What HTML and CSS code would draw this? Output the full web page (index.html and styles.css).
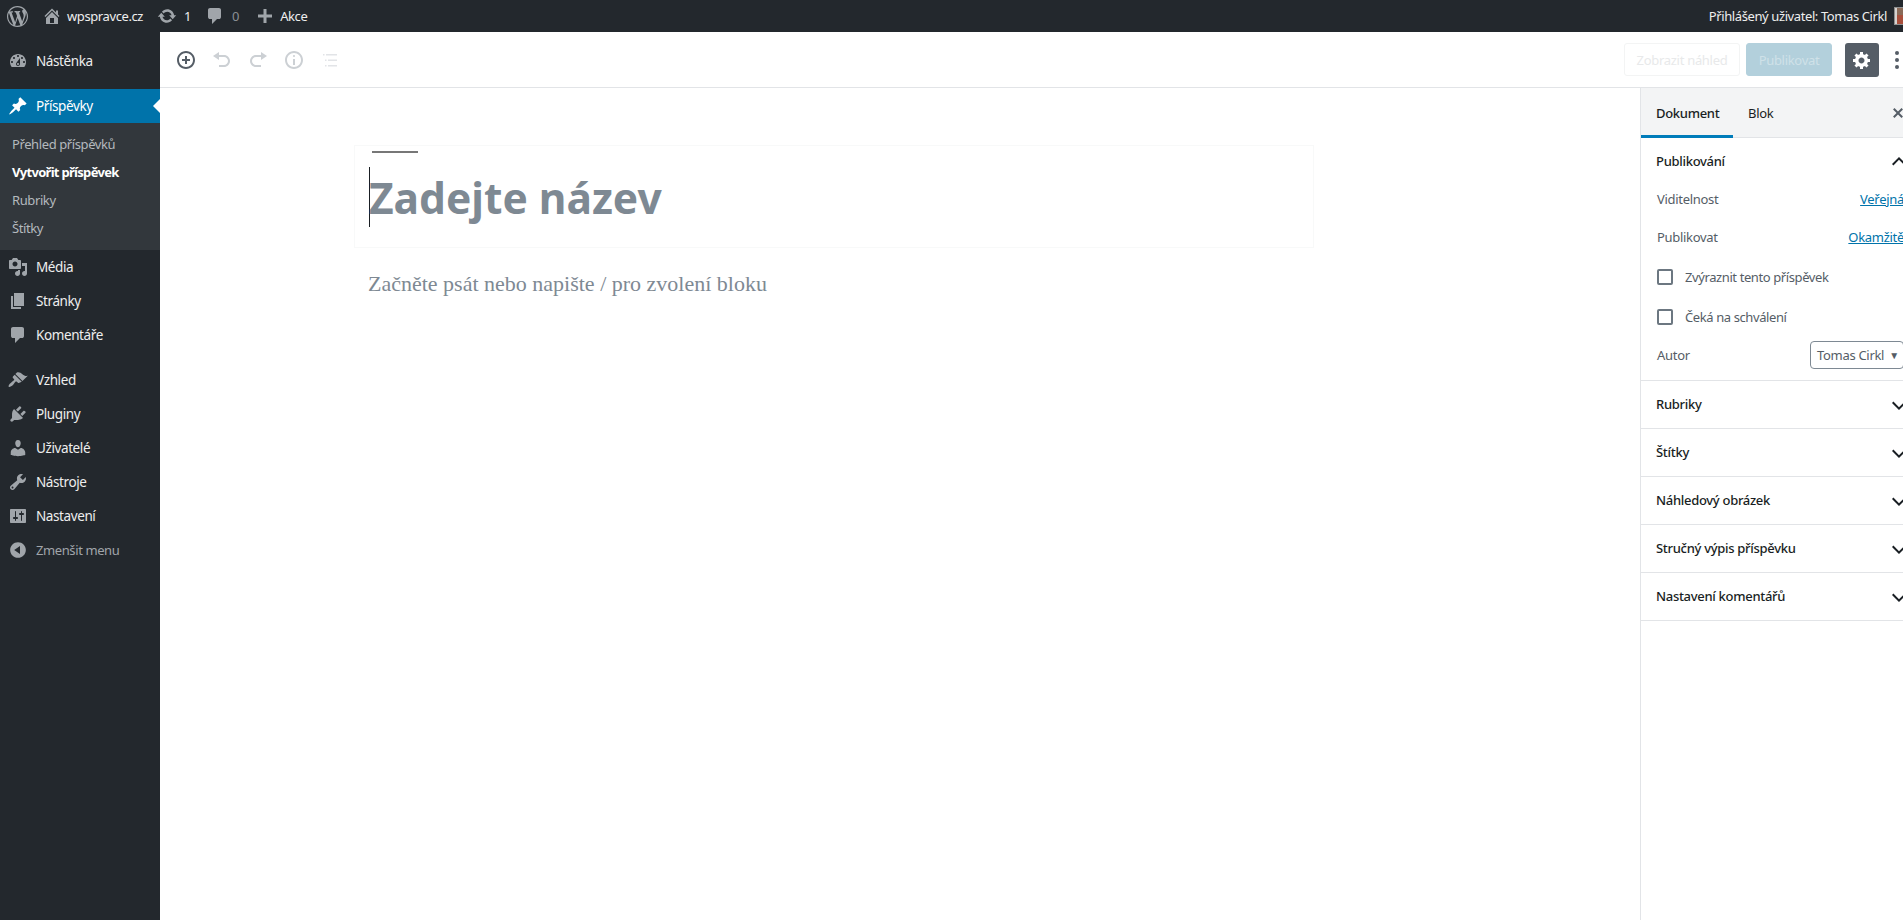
FILE: index.html
```html
<!DOCTYPE html>
<html lang="cs">
<head>
    <meta charset="UTF-8">
    <title>Vytvořit příspěvek</title>
    <link rel="stylesheet" href="styles.css">
</head>
<body>
<div class="page">
    <header class="adminbar">
        <svg class="bar-logo" viewBox="0 0 20 20"><path d="M20 10c0-5.51-4.49-10-10-10C4.48 0 0 4.49 0 10c0 5.52 4.48 10 10 10 5.51 0 10-4.48 10-10zM7.78 15.37L4.37 6.22c.55-.02 1.17-.08 1.17-.08.5-.06.44-1.13-.06-1.11 0 0-1.45.11-2.37.11-.18 0-.37 0-.58-.01C4.12 2.69 6.87 1.11 10 1.11c2.33 0 4.45.87 6.05 2.34-.68-.11-1.65.39-1.65 1.58 0 .74.45 1.36.9 2.1.35.61.55 1.36.55 2.46 0 1.49-1.4 5-1.4 5l-3.03-8.37c.54-.02.82-.17.82-.17.5-.05.44-1.25-.06-1.22 0 0-1.44.12-2.38.12-.87 0-2.33-.12-2.33-.12-.5-.03-.56 1.2-.06 1.22l.92.08 1.26 3.41zM17.41 10c.24-.64.74-1.87.43-4.25.7 1.29 1.05 2.71 1.05 4.25 0 3.29-1.73 6.24-4.4 7.78.97-2.59 1.94-5.2 2.92-7.78zM6.1 18.09C3.12 16.65 1.11 13.53 1.11 10c0-1.3.23-2.48.72-3.59C3.25 10.3 4.67 14.2 6.1 18.09zm4.03-6.63l2.58 6.98c-.86.29-1.76.45-2.71.45-.79 0-1.57-.11-2.29-.33.81-2.38 1.62-4.74 2.42-7.1z"/></svg>
        <a class="bar-item bar-home"><svg viewBox="0 0 20 20"><path d="M16 8.5l1.53 1.53-1.06 1.06L10 4.62l-6.47 6.47-1.06-1.06L10 2.5l4 4v-2h2v4zm-6-2.46l6 5.99V18H4v-5.97zM12 17v-5H8v5h4z"/></svg>wpspravce.cz</a>
        <a class="bar-item bar-updates"><svg viewBox="0 0 20 20"><path d="M10.2 3.28c3.53 0 6.43 2.61 6.92 6h2.08l-3.5 4-3.5-4h2.32c-.45-1.97-2.21-3.45-4.32-3.45-1.45 0-2.73.71-3.54 1.78L4.95 5.66C6.23 4.2 8.11 3.28 10.2 3.28zm-.4 13.44c-3.52 0-6.43-2.61-6.92-6H.8l3.5-4c1.17 1.33 2.33 2.67 3.5 4H5.48c.45 1.97 2.21 3.45 4.32 3.45 1.45 0 2.73-.71 3.54-1.78l1.71 1.95c-1.28 1.46-3.15 2.38-5.25 2.38z"/></svg>1</a>
        <a class="bar-item bar-comments"><svg viewBox="0 0 20 20"><path d="M5 2h9q.82 0 1.41.59T16 4v7q0 .82-.59 1.41T14 13h-2l-5 5v-5H5q-.82 0-1.41-.59T3 11V4q0-.82.59-1.41T5 2z"/></svg><span>0</span></a>
        <a class="bar-item bar-new"><svg viewBox="0 0 20 20"><path d="M17 8.5v3h-5.5V17h-3v-5.5H3v-3h5.5V3h3v5.5z"/></svg>Akce</a>
        <a class="bar-user">Přihlášený uživatel: Tomas Cirkl<span class="avatar"><i></i></span></a>
    </header>

    <div class="wrap">
        <nav class="sidebar">
            <ul class="menu">
                <li><svg viewBox="0 0 20 20"><path d="M3.76 16h12.48c1.1-1.37 1.76-3.11 1.76-5 0-4.42-3.58-8-8-8s-8 3.58-8 8c0 1.89.66 3.63 1.76 5zM10 4c.55 0 1 .45 1 1s-.45 1-1 1-1-.45-1-1 .45-1 1-1zM6 6c.55 0 1 .45 1 1s-.45 1-1 1-1-.45-1-1 .45-1 1-1zm8 0c.55 0 1 .45 1 1s-.45 1-1 1-1-.45-1-1 .45-1 1-1zm-5.37 5.55L12 7v6c0 1.1-.9 2-2 2s-2-.9-2-2c0-.57.24-1.08.63-1.45zM4 10c.55 0 1 .45 1 1s-.45 1-1 1-1-.45-1-1 .45-1 1-1zm12 0c.55 0 1 .45 1 1s-.45 1-1 1-1-.45-1-1 .45-1 1-1zm-5 3c0-.55-.45-1-1-1s-1 .45-1 1 .45 1 1 1 1-.45 1-1z"/></svg>Nástěnka</li>
                <li class="sep"></li>
                <li class="active"><svg viewBox="0 0 20 20"><path d="M10.44 3.02l1.82-1.82 6.36 6.35-1.83 1.82c-1.05-.68-2.48-.57-3.41.36l-.75.75c-.92.93-1.04 2.35-.35 3.41l-1.83 1.82-2.41-2.41-2.8 2.79c-.42.42-3.38 2.71-3.8 2.29s1.86-3.39 2.28-3.81l2.79-2.79L4.1 9.36l1.83-1.82c1.05.69 2.48.57 3.4-.36l.75-.75c.93-.92 1.05-2.35.36-3.41z"/></svg>Příspěvky</li>
                <li class="submenu">
                    <a>Přehled příspěvků</a>
                    <a class="current">Vytvořit příspěvek</a>
                    <a>Rubriky</a>
                    <a>Štítky</a>
                </li>
                <li><svg viewBox="0 0 20 20"><path d="M13 11V4c0-.55-.45-1-1-1h-1.67L9 1H5L3.67 3H2c-.55 0-1 .45-1 1v7c0 .55.45 1 1 1h10c.55 0 1-.45 1-1zM7 4.5c1.38 0 2.5 1.12 2.5 2.5S8.38 9.5 7 9.5 4.5 8.38 4.5 7 5.62 4.5 7 4.5zM14 6h5v10.5c0 1.38-1.12 2.5-2.5 2.5S14 17.88 14 16.5s1.12-2.5 2.5-2.5c.17 0 .34.02.5.05V9h-3V6zm-4 8.05V13h2v3.5c0 1.38-1.12 2.5-2.5 2.5S7 17.88 7 16.5 8.12 14 9.5 14c.17 0 .34.02.5.05z"/></svg>Média</li>
                <li><svg viewBox="0 0 20 20"><path d="M6 15V2h10v13H6zm-1 1h8v2H3V5h2v11z"/></svg>Stránky</li>
                <li><svg viewBox="0 0 20 20"><path d="M5 2h9q.82 0 1.41.59T16 4v7q0 .82-.59 1.41T14 13h-2l-5 5v-5H5q-.82 0-1.41-.59T3 11V4q0-.82.59-1.41T5 2z"/></svg>Komentáře</li>
                <li class="sep"></li>
                <li><svg viewBox="0 0 20 20"><path d="M14.48 11.06L7.41 3.99l1.5-1.5c.5-.56 2.3-.47 3.51.32 1.21.8 1.43 1.28 2.91 2.1 1.18.64 2.45 1.26 4.45.85zm-.71.71L6.7 4.7 4.93 6.47c-.39.39-.39 1.02 0 1.41l1.06 1.06c.39.39.39 1.03 0 1.42-.6.6-1.43 1.11-2.21 1.69-.35.26-.7.53-1.01.84C1.43 13.71 0 16.06.72 16.78c.71.71 3.07-.71 4.2-1.84.31-.31.58-.66.84-1.01.58-.78 1.09-1.61 1.69-2.21.39-.39 1.03-.39 1.42 0l1.06 1.06c.39.39 1.02.39 1.41 0z"/></svg>Vzhled</li>
                <li><svg viewBox="0 0 20 20"><path d="M13.11 4.36L9.87 7.6 8 5.73l3.24-3.24c.35-.34 1.05-.2 1.56.32.52.51.66 1.21.31 1.55zm-8 1.77l.91-1.12 9.01 9.01-1.19.84c-.71.71-2.63 1.16-3.82 1.16H6.14L4.9 17.26c-.59.59-1.54.59-2.12 0-.59-.58-.59-1.53 0-2.12l1.24-1.24v-3.88c0-1.13.4-3.19 1.09-3.89zm7.26 3.97l3.24-3.24c.34-.35 1.04-.21 1.55.31.52.51.66 1.21.31 1.55l-3.24 3.25z"/></svg>Pluginy</li>
                <li><svg viewBox="0 0 20 20"><path d="M10 9.25c-2.27 0-2.73-3.44-2.73-3.44C7 4.02 7.82 2 9.97 2c2.16 0 2.98 2.02 2.71 3.81 0 0-.41 3.44-2.68 3.44zm0 2.57L12.72 10c2.39 0 4.52 2.33 4.52 4.53v2.49s-3.65 1.13-7.24 1.13c-3.65 0-7.24-1.13-7.24-1.13v-2.49c0-2.25 1.94-4.48 4.47-4.48z"/></svg>Uživatelé</li>
                <li><svg viewBox="0 0 20 20"><path d="M16.68 9.77c-1.34 1.34-3.3 1.67-4.95.99l-5.41 6.52c-.99.99-2.59.99-3.58 0s-.99-2.59 0-3.57l6.52-5.42c-.68-1.65-.35-3.61.99-4.95 1.28-1.28 3.12-1.62 4.72-1.06l-2.89 2.89 2.82 2.82 2.86-2.87c.53 1.58.18 3.39-1.08 4.65zM3.81 16.21c.4.39 1.04.39 1.43 0 .4-.4.4-1.04 0-1.43-.39-.4-1.03-.4-1.43 0-.39.39-.39 1.03 0 1.43z"/></svg>Nástroje</li>
                <li><svg viewBox="0 0 20 20"><path d="M18 16V4c0-.55-.45-1-1-1H3c-.55 0-1 .45-1 1v12c0 .55.45 1 1 1h14c.55 0 1-.45 1-1zM8 11h1c.55 0 1 .45 1 1s-.45 1-1 1H8v1.5c0 .28-.22.5-.5.5s-.5-.22-.5-.5V13H6c-.55 0-1-.45-1-1s.45-1 1-1h1V5.5c0-.28.22-.5.5-.5s.5.22.5.5V11zm5-2h-1c-.55 0-1-.45-1-1s.45-1 1-1h1V5.5c0-.28.22-.5.5-.5s.5.22.5.5V7h1c.55 0 1 .45 1 1s-.45 1-1 1h-1v5.5c0 .28-.22.5-.5.5s-.5-.22-.5-.5V9z"/></svg>Nastavení</li>
                <li class="collapse"><svg viewBox="0 0 20 20"><path d="M10 2.16c4.33 0 7.84 3.51 7.84 7.84s-3.51 7.84-7.84 7.84S2.16 14.33 2.16 10 5.71 2.16 10 2.16zm2 11.72V6.12L6.18 9.97z"/></svg>Zmenšit menu</li>
            </ul>
        </nav>

        <div class="content">
            <div class="toolbar">
                <button class="tool tool-on"><svg viewBox="0 0 20 20"><path d="M10 1c-5 0-9 4-9 9s4 9 9 9 9-4 9-9-4-9-9-9zm0 16c-3.9 0-7-3.1-7-7s3.1-7 7-7 7 3.1 7 7-3.1 7-7 7zm1-11H9v3H6v2h3v3h2v-3h3V9h-3V6z"/></svg></button>
                <button class="tool"><svg viewBox="0 0 20 20"><path d="M12 5H7V2L1 6l6 4V7h5c2.2 0 4 1.8 4 4s-1.8 4-4 4H7v2h5c3.3 0 6-2.7 6-6s-2.7-6-6-6z"/></svg></button>
                <button class="tool"><svg viewBox="0 0 20 20"><path d="M8 5h5V2l6 4-6 4V7H8c-2.2 0-4 1.8-4 4s1.8 4 4 4h5v2H8c-3.3 0-6-2.7-6-6s2.7-6 6-6z"/></svg></button>
                <button class="tool"><svg viewBox="0 0 20 20"><path d="M9 15h2V9H9v6zm1-10c-.5 0-1 .5-1 1s.5 1 1 1 1-.5 1-1-.5-1-1-1zm0-4c-5 0-9 4-9 9s4 9 9 9 9-4 9-9-4-9-9-9zm0 16c-3.9 0-7-3.1-7-7s3.1-7 7-7 7 3.1 7 7-3.1 7-7 7z"/></svg></button>
                <button class="tool tool-list"><svg viewBox="0 0 20 20"><path d="M3 4h1.5v1.5H3zM6 4h11v1.5H6zM5 9.5h1.5V11H5zM8 9.5h9V11H8zM5 15h1.5v1.5H5zM8 15h9v1.5H8z"/></svg></button>
                <div class="toolbar-right">
                    <button class="btn-preview">Zobrazit náhled</button>
                    <button class="btn-publish">Publikovat</button>
                    <button class="btn-gear"><svg viewBox="0 0 20 20"><path d="M18 12h-2.18c-.17.7-.44 1.35-.81 1.93l1.54 1.54-2.1 2.1-1.54-1.54c-.58.36-1.23.63-1.91.79V19H8v-2.18c-.68-.16-1.33-.43-1.91-.79l-1.54 1.54-2.12-2.12 1.54-1.54c-.36-.58-.63-1.23-.79-1.91H1V9.03h2.17c.16-.7.44-1.35.8-1.94L2.43 5.55l2.1-2.1 1.54 1.54c.58-.37 1.24-.64 1.93-.81V2h3v2.18c.68.16 1.33.43 1.91.79l1.54-1.54 2.12 2.12-1.54 1.54c.36.59.64 1.24.8 1.94H18V12zm-8.5 1.5c1.66 0 3-1.34 3-3s-1.34-3-3-3-3 1.34-3 3 1.34 3 3 3z"/></svg></button>
                    <span class="kebab"><i></i><i></i><i></i></span>
                </div>
            </div>

            <div class="columns">
                <main class="editor">
                    <div class="title-block">
                        <div class="title-dash"></div>
                        <h1 class="title">Zadejte název</h1>
                    </div>
                    <p class="placeholder">Začněte psát nebo napište / pro zvolení bloku</p>
                </main>

                <aside class="panel">
                    <div class="tabs">
                        <span class="tab tab-on">Dokument</span>
                        <span class="tab">Blok</span>
                        <svg class="tabs-close" viewBox="0 0 20 20"><path d="M14.95 6.46L11.41 10l3.54 3.54-1.41 1.41L10 11.42l-3.53 3.53-1.42-1.42L8.58 10 5.05 6.47l1.42-1.42L10 8.58l3.54-3.53z"/></svg>
                    </div>
                    <section class="box box-open">
                        <h2 class="box-head">Publikování<svg viewBox="0 0 24 24"><path d="M6.41 15.41L12 9.83l5.59 5.58L19 14l-7-7-7 7z"/></svg></h2>
                        <div class="row row-vis"><span>Viditelnost</span><a>Veřejná</a></div>
                        <div class="row row-pub"><span>Publikovat</span><a>Okamžitě</a></div>
                        <label class="check"><i></i>Zvýraznit tento příspěvek</label>
                        <label class="check"><i></i>Čeká na schválení</label>
                        <div class="row row-author"><span>Autor</span><span class="select">Tomas Cirkl<b>▼</b></span></div>
                    </section>
                    <section class="box"><h2 class="box-head">Rubriky<svg viewBox="0 0 24 24"><path d="M17.59 8.59L12 14.17 6.41 8.59 5 10l7 7 7-7z"/></svg></h2></section>
                    <section class="box"><h2 class="box-head">Štítky<svg viewBox="0 0 24 24"><path d="M17.59 8.59L12 14.17 6.41 8.59 5 10l7 7 7-7z"/></svg></h2></section>
                    <section class="box"><h2 class="box-head">Náhledový obrázek<svg viewBox="0 0 24 24"><path d="M17.59 8.59L12 14.17 6.41 8.59 5 10l7 7 7-7z"/></svg></h2></section>
                    <section class="box"><h2 class="box-head">Stručný výpis příspěvku<svg viewBox="0 0 24 24"><path d="M17.59 8.59L12 14.17 6.41 8.59 5 10l7 7 7-7z"/></svg></h2></section>
                    <section class="box"><h2 class="box-head">Nastavení komentářů<svg viewBox="0 0 24 24"><path d="M17.59 8.59L12 14.17 6.41 8.59 5 10l7 7 7-7z"/></svg></h2></section>
                </aside>
            </div>
        </div>
    </div>
</div>
</body>
</html>
```

FILE: styles.css
```css
* {
    margin: 0;
    padding: 0;
    box-sizing: border-box;
}

html, body {
    height: 920px;
    overflow: hidden;
    background: #fff;
}

body {
    font-family: "Noto Sans", "Open Sans", sans-serif;
    font-size: 13px;
    color: #191e23;
}

svg {
    display: block;
    fill: currentColor;
    flex: none;
}

/* the real page is wider than the window and gets cut on the right */
.page {
    width: 1920px;
    height: 920px;
    display: flex;
    flex-direction: column;
}

/* top bar */
.adminbar {
    height: 32px;
    flex: none;
    display: flex;
    align-items: center;
    background: #23282d;
    color: #eee;
    padding-left: 7px;
    letter-spacing: -.4px;
}

.bar-logo {
    width: 21px;
    height: 21px;
    color: #a0a5aa;
    margin-right: 14px;
}

.bar-item {
    display: flex;
    align-items: center;
}

.bar-item svg {
    width: 20px;
    height: 20px;
    color: #a0a5aa;
}

.bar-home svg {
    margin-right: 5px;
}

.bar-updates {
    margin-left: 14px;
}

.bar-updates svg {
    margin-right: 7px;
}

.bar-comments {
    margin-left: 14px;
}

.bar-comments svg {
    margin-right: 7px;
}

.bar-comments span {
    color: #8a8f94;
}

.bar-new {
    margin-left: 16px;
}

.bar-new svg {
    margin-right: 5px;
}

.bar-user {
    margin-left: auto;
    display: flex;
    align-items: center;
}

.avatar {
    width: 18px;
    height: 18px;
    margin: 0 8px 0 7px;
    background: #d6d3d0;
    border: 1px solid #8f8f8f;
    display: flex;
    justify-content: flex-start;
    padding-left: 2px;
}

.avatar i {
    width: 8px;
    height: 16px;
    background: linear-gradient(#8a6a58 0 45%, #a84f3c 45%);
}

/* left menu */
.wrap {
    flex: 1;
    display: flex;
    min-height: 0;
}

.sidebar {
    width: 160px;
    flex: none;
    background: #23282d;
    padding-top: 12px;
}

.menu {
    list-style: none;
    color: #eee;
    font-size: 13.5px;
    letter-spacing: -.4px;
}

.menu li {
    height: 34px;
    display: flex;
    align-items: center;
    padding: 0 0 1px 8px;
}

.menu li svg {
    width: 20px;
    height: 20px;
    margin: 1px 8px 0 0;
    color: #a0a5aa;
}

.menu li.sep {
    height: 11px;
    padding: 0;
}

.menu li.active {
    position: relative;
    background: #0073aa;
    color: #fff;
}

.menu li.active svg {
    color: #fff;
}

.menu li.active::after {
    content: "";
    position: absolute;
    right: 0;
    top: 10px;
    border: 7px solid transparent;
    border-right-color: #fff;
    border-left-width: 0;
}

.menu li.submenu {
    height: 127px;
    display: block;
    background: #32373c;
    padding: 7px 0 8px 12px;
    font-size: 13px;
    color: #b4b9be;
}

.submenu a {
    display: block;
    height: 28px;
    line-height: 28px;
}

.submenu a.current {
    color: #fff;
    font-weight: 700;
    letter-spacing: -.7px;
}

.menu li.collapse {
    color: #a0a5aa;
    font-size: 13px;
}

/* editor toolbar */
.content {
    flex: 1;
    display: flex;
    flex-direction: column;
    min-width: 0;
}

.toolbar {
    height: 56px;
    flex: none;
    display: flex;
    align-items: center;
    padding-left: 8px;
    border-bottom: 1px solid #e2e4e7;
}

.tool {
    width: 36px;
    height: 36px;
    border: none;
    background: none;
    display: flex;
    align-items: center;
    justify-content: center;
    color: #ccd0d4;
}

.tool svg {
    width: 20px;
    height: 20px;
}

.tool-on {
    color: #555d66;
}

.tool-list {
    color: #e2e4e7;
}

.toolbar-right {
    margin-left: auto;
    display: flex;
    align-items: center;
    font-size: 13px;
}

.toolbar-right button {
    font: inherit;
    letter-spacing: -.3px;
    border-radius: 3px;
}

.btn-preview {
    width: 116px;
    height: 33px;
    border: 1px solid #f3f4f4;
    background: #fff;
    color: #e8e9ea;
}

.btn-publish {
    width: 86px;
    height: 33px;
    margin-left: 6px;
    border: 1px solid #b3d0dc;
    background: #b3d0dc;
    color: #cfe1e8;
}

.btn-gear {
    width: 34px;
    height: 34px;
    margin-left: 13px;
    border: none;
    background: #555d66;
    color: #fff;
    display: flex;
    align-items: center;
    justify-content: center;
}

.btn-gear svg {
    width: 20px;
    height: 20px;
}

.kebab {
    width: 41px;
    display: flex;
    flex-direction: column;
    align-items: flex-start;
    gap: 3px;
    padding-left: 16px;
}

.kebab i {
    width: 4px;
    height: 4px;
    border-radius: 50%;
    background: #555d66;
}

/* post area */
.columns {
    flex: 1;
    display: flex;
    min-height: 0;
}

.editor {
    flex: 1;
    padding: 57px 0 0 194px;
}

.title-block {
    position: relative;
    width: 960px;
    height: 103px;
    border: 1px solid #f8f9f9;
    padding: 21px 0 0 14px;
}

.title-dash {
    position: absolute;
    left: 17px;
    top: 5px;
    width: 46px;
    height: 2px;
    background: #777;
}

.title {
    height: 60px;
    border-left: 1px solid #191e23;
    font-size: 42.5px;
    line-height: 62px;
    font-weight: 700;
    color: #7e8993;
    text-indent: -1px;
}

.placeholder {
    margin: 21px 0 0 14px;
    font-family: "Liberation Serif", serif;
    font-size: 22px;
    line-height: 30px;
    color: #7e8993;
}

/* settings panel */
.panel {
    width: 280px;
    flex: none;
    border-left: 1px solid #e2e4e7;
}

.tabs {
    height: 50px;
    display: flex;
    background: #f3f4f5;
    border-bottom: 1px solid #e2e4e7;
    position: relative;
}

.tab {
    padding: 0 15px;
    line-height: 50px;
    letter-spacing: -.3px;
}

.tab-on {
    width: 92px;
    border-bottom: 3px solid #007cba;
    font-weight: 500;
    height: 50px;
}

.tabs-close {
    position: absolute;
    left: 247px;
    top: 15px;
    width: 20px;
    height: 20px;
    color: #555d66;
}

.box {
    border-bottom: 1px solid #e2e4e7;
}

.box-head {
    height: 47px;
    display: flex;
    align-items: center;
    padding: 0 0 2px 15px;
    font-size: 13px;
    font-weight: 500;
    letter-spacing: -.3px;
    position: relative;
}

.box-head svg {
    position: absolute;
    left: 246px;
    top: 12px;
    width: 24px;
    height: 24px;
}

.box-open {
    height: 243px;
}

.row {
    display: flex;
    justify-content: space-between;
    align-items: center;
    padding: 0 16px;
    width: 279px;
    color: #555d66;
    letter-spacing: -.3px;
}

.row a {
    color: #0073aa;
    text-decoration: underline;
}

.row-vis {
    margin-top: 2px;
    height: 24px;
}

.row-pub {
    margin-top: 14px;
    height: 24px;
}

.check {
    display: flex;
    align-items: center;
    height: 16px;
    margin: 0 0 24px 16px;
    color: #555d66;
    letter-spacing: -.4px;
}

.row-pub + .check {
    margin-top: 20px;
}

.check i {
    width: 16px;
    height: 16px;
    border: 2px solid #6c7781;
    border-radius: 2px;
    margin-right: 12px;
}

.row-author {
    margin-top: -8px;
    height: 28px;
}

.select {
    width: 94px;
    height: 28px;
    border: 1px solid #7e8993;
    border-radius: 4px;
    display: flex;
    align-items: center;
    padding-left: 6px;
    color: #555d66;
}

.select b {
    font-size: 10px;
    margin-left: 5px;
    font-weight: 400;
}
```
